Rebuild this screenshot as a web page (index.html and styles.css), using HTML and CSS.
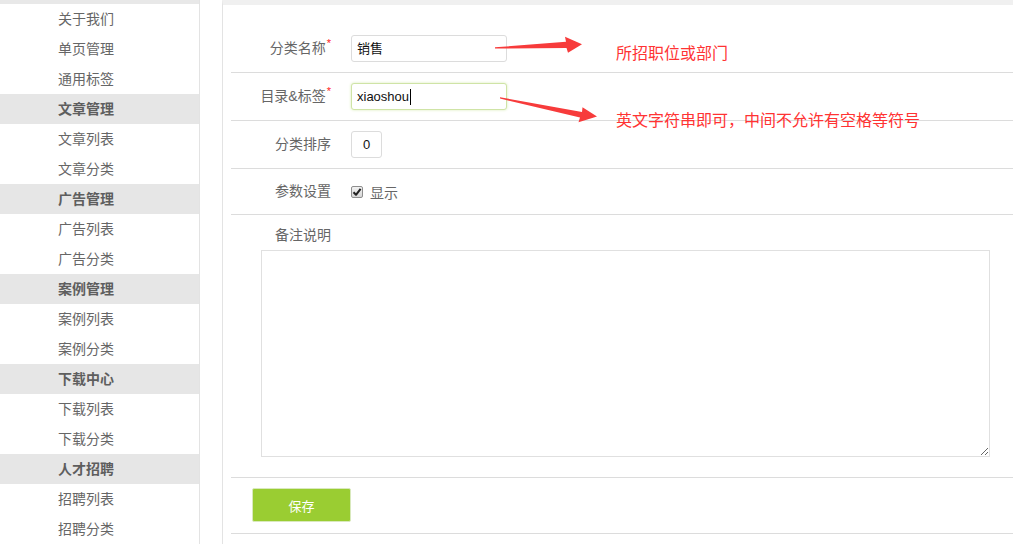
FILE: index.html
```html
<!DOCTYPE html>
<html lang="zh-CN">
<head>
<meta charset="utf-8">
<title>分类编辑</title>
<link rel="stylesheet" href="styles.css">
</head>
<body>
<div class="layout">
  <aside class="sidebar">
    <div class="side-top"></div>
    <a class="side-item">关于我们</a>
    <a class="side-item">单页管理</a>
    <a class="side-item">通用标签</a>
    <div class="side-head">文章管理</div>
    <a class="side-item">文章列表</a>
    <a class="side-item">文章分类</a>
    <div class="side-head">广告管理</div>
    <a class="side-item">广告列表</a>
    <a class="side-item">广告分类</a>
    <div class="side-head">案例管理</div>
    <a class="side-item">案例列表</a>
    <a class="side-item">案例分类</a>
    <div class="side-head">下载中心</div>
    <a class="side-item">下载列表</a>
    <a class="side-item">下载分类</a>
    <div class="side-head">人才招聘</div>
    <a class="side-item">招聘列表</a>
    <a class="side-item">招聘分类</a>
  </aside>
  <main class="main">
    <form class="form">
      <div class="row row-first">
        <label class="label">分类名称<sup class="req">*</sup></label>
        <div class="field field-name">销售</div>
      </div>
      <div class="row">
        <label class="label">目录&amp;标签<sup class="req">*</sup></label>
        <div class="field field-name field-focus">xiaoshou<span class="caret"></span></div>
      </div>
      <div class="row">
        <label class="label">分类排序</label>
        <div class="field field-order">0</div>
      </div>
      <div class="row row-check">
        <label class="label">参数设置</label>
        <span class="checkbox">
          <svg width="10" height="10" viewBox="0 0 10 10"><path d="M1.5 5.2 L4 7.8 L8.6 1.8" fill="none" stroke="#222" stroke-width="2" stroke-linejoin="round"/></svg>
        </span>
        <span class="check-text">显示</span>
      </div>
      <div class="row row-note">
        <label class="label">备注说明</label>
        <textarea class="note"></textarea>
      </div>
      <div class="row row-btn">
        <button type="button" class="btn-save">保存</button>
      </div>
    </form>
  </main>
</div>

<svg class="annot-arrows" width="1013" height="544" viewBox="0 0 1013 544">
  <polygon points="495,47.3 566,41.8 565,36.8 582,44.2 568,52.8 566.5,48 495,48.6" fill="#f73b3b"/>
  <polygon points="500,97.2 582,112 582.5,107.3 597,116.5 578.5,122.3 580,117.6 500,98.6" fill="#f73b3b"/>
</svg>
<div class="annot annot-1">所招职位或部门</div>
<div class="annot annot-2">英文字符串即可，中间不允许有空格等符号</div>
</body>
</html>
```

FILE: styles.css
```css
html, body {
  margin: 0;
  padding: 0;
  background: #fff;
  width: 1013px;
  height: 544px;
  overflow: hidden;
  font-family: "Liberation Sans", "Noto Sans CJK SC", sans-serif;
}

.layout {
  display: flex;
  height: 544px;
}

/* sidebar */
.sidebar {
  width: 199px;
  border-right: 1px solid #e3e3e3;
  display: flex;
  flex-direction: column;
  flex: none;
}

.side-top {
  height: 4px;
  background: #e8e8e8;
}

.side-item,
.side-head {
  display: block;
  height: 30px;
  line-height: 30px;
  padding-left: 58px;
  font-size: 14px;
  color: #666;
  text-decoration: none;
}

.side-head {
  background: #e6e6e6;
  font-weight: bold;
  color: #5e5e5e;
}

/* main */
.main {
  flex: 1;
  margin-left: 22px;
  border-left: 1px solid #e3e3e3;
  border-top: 5px solid #f0f0f0;
}

.form {
  margin: 0;
  padding: 20px 0 0 8px;
}

.row {
  display: flex;
  align-items: center;
  padding: 10px 0;
  border-bottom: 1px solid #dcdcdc;
}

.label {
  width: 100px;
  flex: none;
  margin-right: 20px;
  text-align: right;
  font-size: 14px;
  line-height: 24px;
  color: #666;
  padding-bottom: 2px;
}

.req {
  color: #f22;
  font-size: 11px;
  line-height: 0;
  vertical-align: 6px;
  margin-left: 1px;
}

.field {
  box-sizing: border-box;
  height: 27px;
  border: 1px solid #dcdcdc;
  border-radius: 3px;
  padding: 0 5px;
  font-size: 13px;
  line-height: 25px;
  color: #111;
  background: #fff;
}

.field-name {
  width: 156px;
}

.field-focus {
  border-color: #cfe4a6;
  box-shadow: 0 0 3px #d9ecb7;
}

.caret {
  display: inline-block;
  width: 1px;
  height: 16px;
  background: #000;
  vertical-align: -4px;
  margin-left: 1px;
}

.field-order {
  width: 31px;
  text-align: center;
  padding: 0;
}

.row-check {
  height: 25px;
}

.checkbox {
  box-sizing: border-box;
  width: 12px;
  height: 12px;
  border: 1px solid #8e8e8e;
  border-radius: 2px;
  background: linear-gradient(#f2f2f2, #d6d6d6);
  display: flex;
  align-items: center;
  justify-content: center;
  margin-left: 0;
}

.check-text {
  margin-left: 7px;
  font-size: 14px;
  color: #666;
}

.row-note {
  display: block;
  padding-bottom: 20px;
}

.row-note .label {
  display: block;
  line-height: 20px;
  padding-bottom: 0;
}

.note {
  display: block;
  box-sizing: border-box;
  width: 729px;
  height: 207px;
  margin: 5px 0 0 30px;
  border: 1px solid #e0e0e0;
  resize: both;
  font-family: inherit;
}

.row-btn {
  padding: 10px 0 11px;
}

.btn-save {
  box-sizing: border-box;
  width: 99px;
  height: 34px;
  margin-left: 21px;
  background: #9acd32;
  border: 1px solid #d9e9bd;
  border-radius: 2px;
  color: #fff;
  font-size: 13px;
  font-family: inherit;
}

/* annotations overlaid on the screenshot */
.annot-arrows {
  position: absolute;
  left: 0;
  top: 0;
  pointer-events: none;
}

.annot {
  position: absolute;
  font-size: 16px;
  line-height: 20px;
  color: #f33;
  white-space: nowrap;
  font-family: "Noto Sans CJK SC", sans-serif;
}

.annot-1 {
  left: 616px;
  top: 42px;
}

.annot-2 {
  left: 616px;
  top: 109px;
}
```
